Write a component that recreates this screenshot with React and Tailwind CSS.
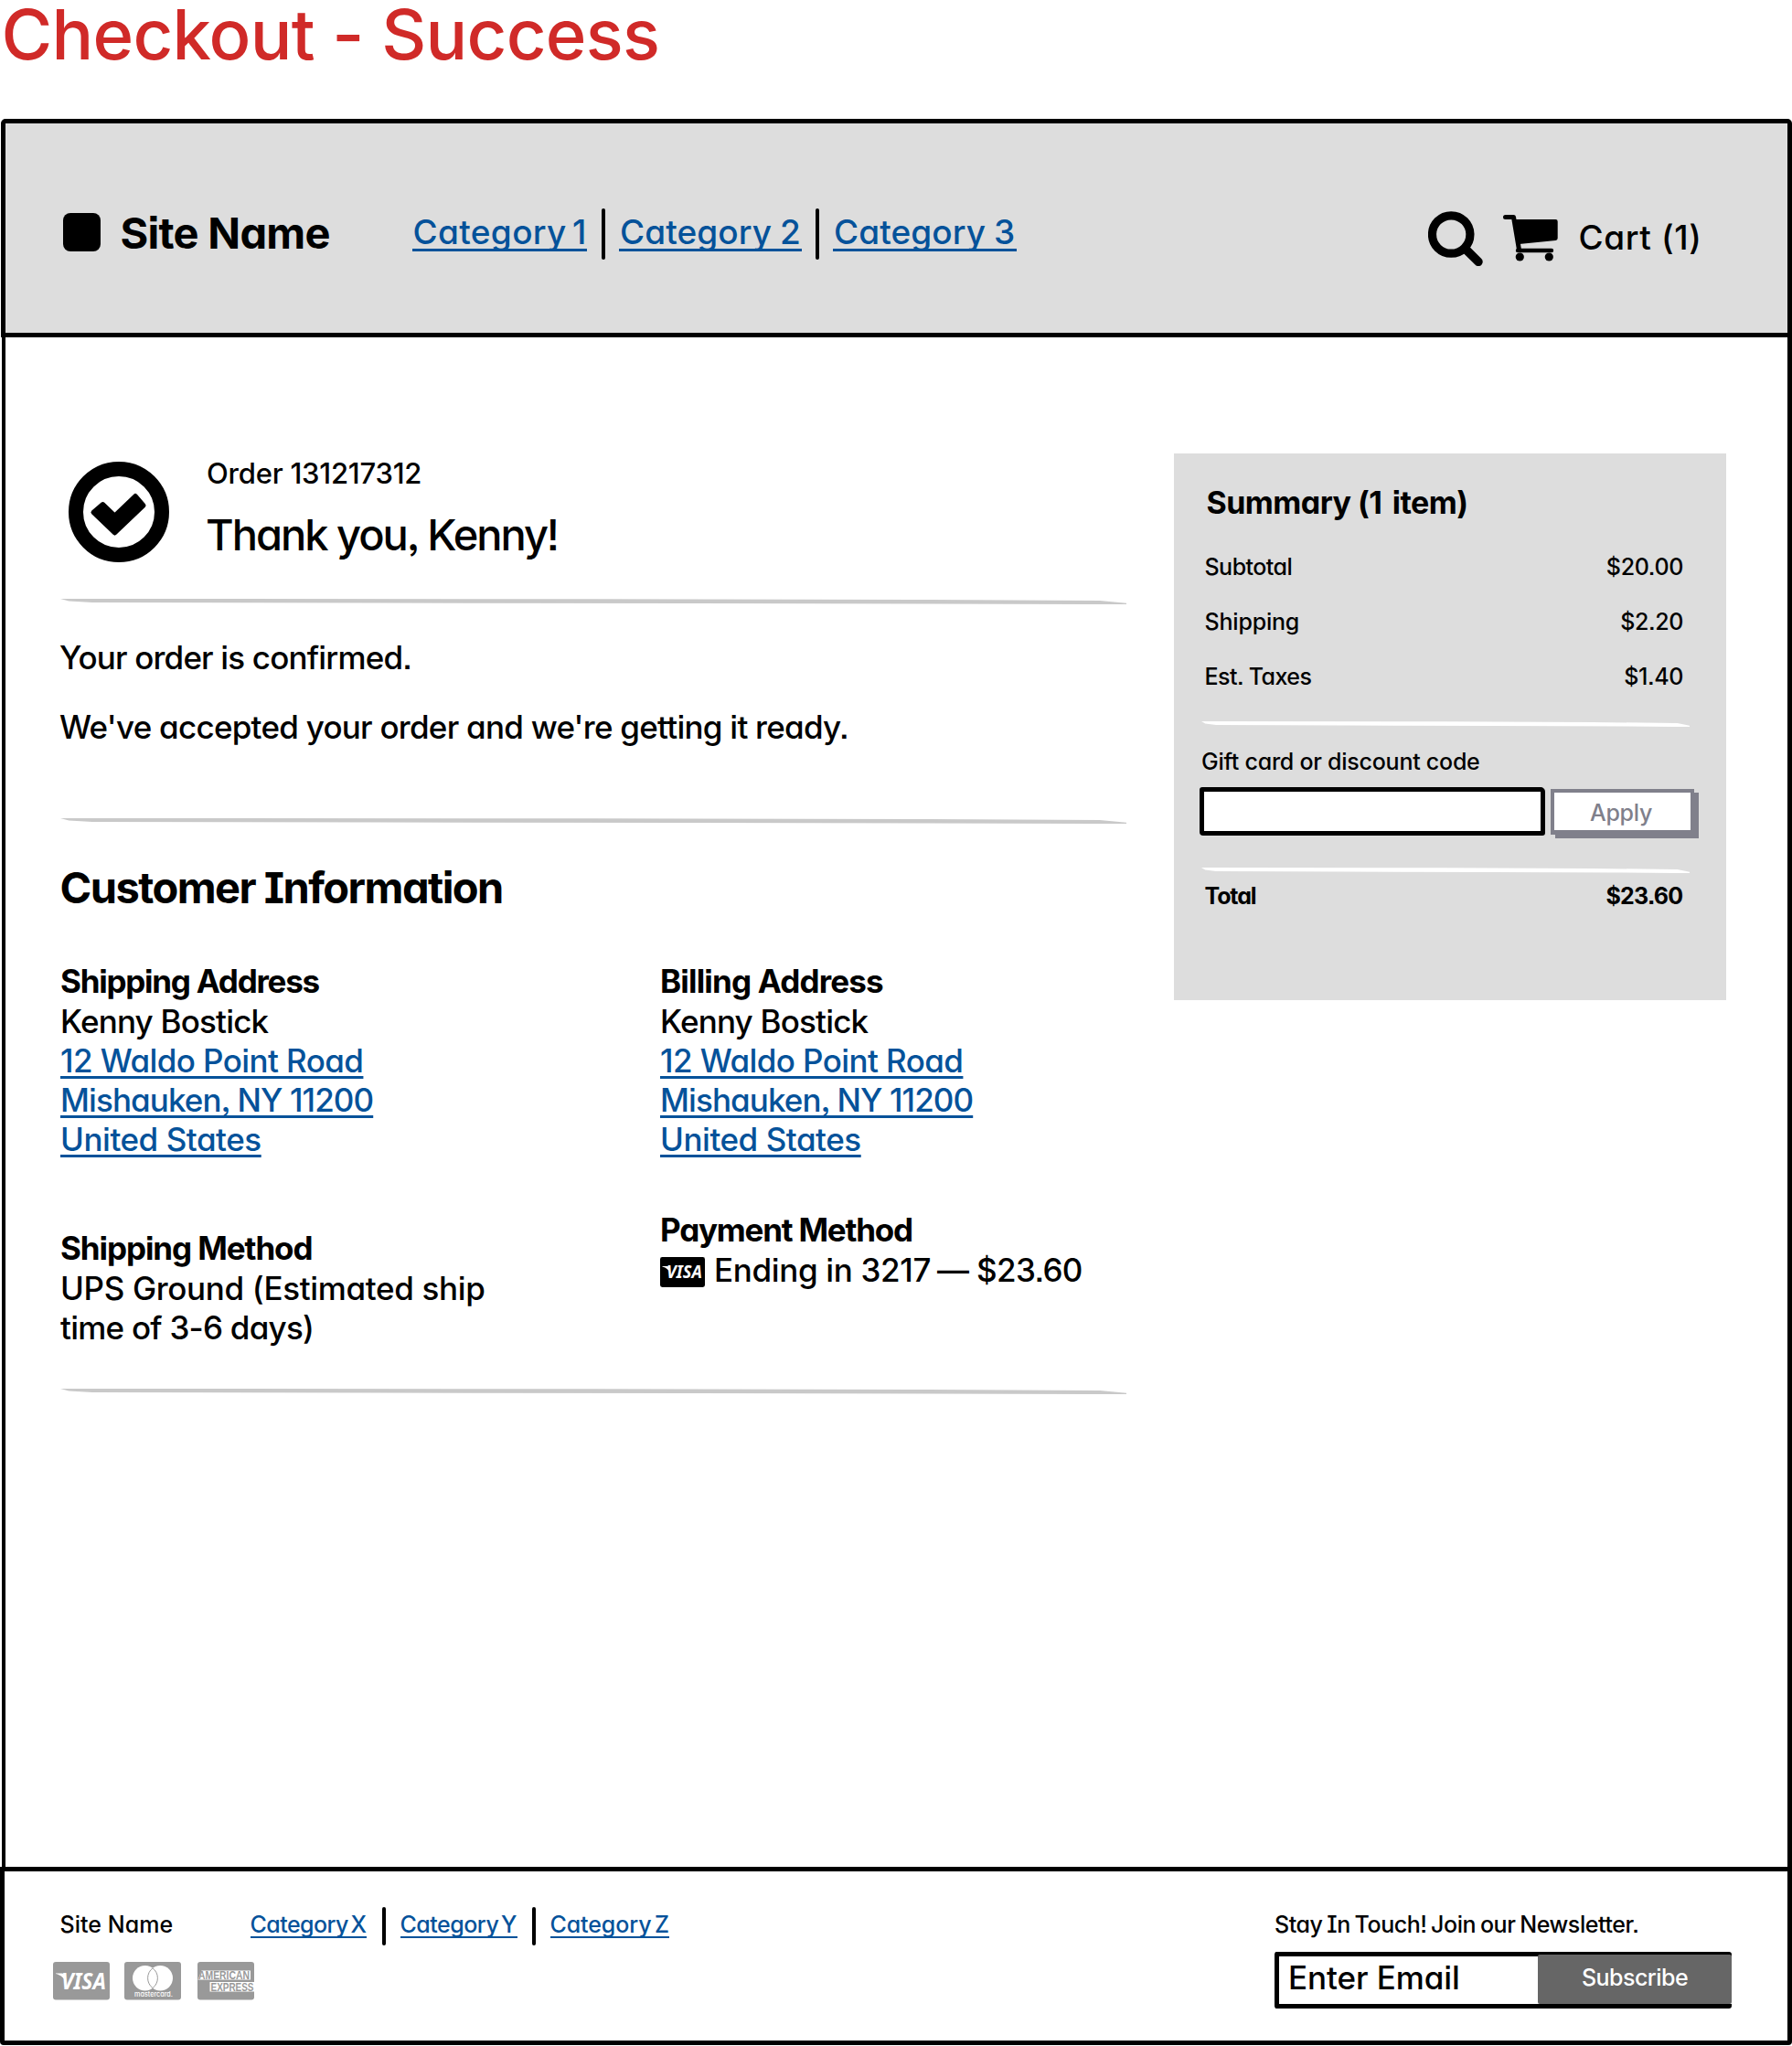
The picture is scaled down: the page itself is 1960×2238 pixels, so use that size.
function Visa({ className }) {
  return (
    <svg viewBox="0 0 62 41.5" className={`overflow-visible ${className}`} role="img" aria-label="Visa">
      <rect width="62" height="41.5" rx="3" fill="currentColor" />
      <text
        x="9"
        y="29.6"
        textLength="49"
        lengthAdjust="spacingAndGlyphs"
        className="fill-white font-['Open_Sans',sans-serif] text-[24.5px] font-bold italic"
      >
        VISA
      </text>
      <path d="M3 12.4h6.4c1.8 0 2.6.7 3 2.3l1.8 7.6C12.200 17.600 8.600 14.400 3 13z" fill="#fff" />
    </svg>
  );
}

function Mastercard({ className }) {
  return (
    <svg viewBox="0 0 62 41.5" className={className} role="img" aria-label="Mastercard">
      <rect width="62" height="41.5" rx="3" fill="currentColor" />
      <circle cx="22.700" cy="17.700" r="13.700" fill="#fff" />
      <circle cx="39.300" cy="17.700" r="13.700" fill="#fff" />
      <path d="M31 6.800a13.700 13.700 0 0 1 0 21.800a13.700 13.700 0 0 1 0-21.800z" fill="#fff" stroke="currentColor" strokeWidth="1" />
      <text
        x="11"
        y="38"
        textLength="42"
        lengthAdjust="spacingAndGlyphs"
        className="fill-white font-['Inter',sans-serif] text-[7.5px] font-medium [font-feature-settings:'cv11']"
      >
        mastercard.
      </text>
    </svg>
  );
}

function Amex({ className }) {
  return (
    <svg viewBox="0 0 62 41.5" className={`overflow-visible ${className}`} role="img" aria-label="American Express">
      <rect width="62" height="41.5" rx="3" fill="currentColor" />
      <path d="M0.500 19.500L4.500 9.500H58V19.500ZM13.500 22H62V32.500H13.500Z" fill="#fff" />
      <g fill="currentColor" className="font-['Liberation_Sans',sans-serif] text-[12px] font-bold">
        <text x="1" y="18.800" textLength="56" lengthAdjust="spacingAndGlyphs">AMERICAN</text>
        <text x="14.500" y="31.500" textLength="47" lengthAdjust="spacingAndGlyphs">EXPRESS</text>
      </g>
    </svg>
  );
}

function SearchIcon() {
  return (
    <svg viewBox="0 0 60 60" className="h-[60px] w-[60px]" fill="none" stroke="#000">
      <circle cx="25.200" cy="25.500" r="20.700" strokeWidth="9.200" />
      <path d="M41 41.500L55 55.300" strokeWidth="9.500" strokeLinecap="round" />
    </svg>
  );
}

function CartIcon() {
  return (
    <svg viewBox="0 0 60 51" className="h-[51px] w-[60px]">
      <path d="M2.500 2.500H11.500L17.300 37" fill="none" stroke="#000" strokeWidth="5" strokeLinecap="round" strokeLinejoin="round" />
      <path d="M12 5H57.500a2.200 2.200 0 0 1 2.200 2.200V25.500a2.500 2.500 0 0 1-2.200 2.500L17.500 32z" />
      <path d="M16 39H53" stroke="#000" strokeWidth="4.400" strokeLinecap="round" />
      <circle cx="18.300" cy="46" r="4.600" />
      <circle cx="50.300" cy="46" r="4.600" />
    </svg>
  );
}

function CheckCircle() {
  return (
    <svg viewBox="0 0 110 110" className="ml-[9px] mt-[9px] h-[110px] w-[110px] shrink-0">
      <circle cx="55" cy="55" r="47" fill="none" stroke="#000" strokeWidth="16" />
      <path
        d="M37.500 46.500L50.500 59L73 37.500L82 48L50.500 78L27 55.500Z"
        stroke="#000"
        strokeWidth="5"
        strokeLinejoin="round"
      />
    </svg>
  );
}

function Rule({ className }) {
  return (
    <div
      className={`h-[7px] [clip-path:polygon(0_0,50%_3%,80%_14%,97.5%_28%,100%_68%,100%_86%,97%_84%,60%_70%,30%_66%,3%_57%,0.8%_34%)] ${className}`}
    />
  );
}

const LINK =
  "text-[#05529a] underline decoration-[2.5px] underline-offset-[4px] [text-decoration-skip-ink:none]";

function Address({ title, titleClass }) {
  return (
    <div className="flex flex-col items-start text-[35px] leading-[43px]">
      <h3 className={`h-[44px] font-bold ${titleClass}`}>{title}</h3>
      <p className="tracking-[-0.8px]">Kenny Bostick</p>
      <a className={`tracking-[-0.58px] ${LINK}`}>12 Waldo Point Road</a>
      <a className={`tracking-[-0.9px] ${LINK}`}>Mishauken, NY 11200</a>
      <a className={`tracking-[-0.46px] ${LINK}`}>United States</a>
    </div>
  );
}

function SummaryRow({ label, labelClass, value, valueClass }) {
  return (
    <div className="ml-[33.500px] flex h-[60px] w-[523.5px] justify-between text-[25px] leading-none">
      <span className={labelClass}>{label}</span>
      <span className={valueClass}>{value}</span>
    </div>
  );
}

function Header() {
  return (
    <header className="ml-px flex h-[239px] items-start rounded-t-[5px] border-[5px] border-black bg-[#dddddd] whitespace-nowrap">
      <div className="ml-[63px] mt-[98px] h-[42px] w-[41px] rounded-[8px] bg-black" />
      <h2 className="ml-[21.500px] mt-[96px] w-[319.5px] text-[47px] font-bold leading-none tracking-[-0.72px]">
        Site Name
      </h2>
      <nav className="mt-[93px] flex text-[37px] leading-none text-[#05529a]">
        <a className="mt-[7px] h-[40px] w-[191px] border-b-[3px] border-[#05529a] pl-[0.500px] tracking-[0.35px] [word-spacing:-4px]">
          Category 1
        </a>
        <span className="ml-4 h-14 w-1 rounded-full bg-black" />
        <a className="ml-[15px] mt-[7px] h-[40px] w-[200px] border-b-[3px] border-[#05529a] pl-px tracking-[0.08px] [word-spacing:-1px]">
          Category 2
        </a>
        <span className="ml-[15px] h-14 w-1 rounded-full bg-black" />
        <a className="ml-[15px] mt-[7px] h-[40px] w-[201px] border-b-[3px] border-[#05529a] pl-px tracking-[0.08px] [word-spacing:-1px]">
          Category 3
        </a>
      </nav>
      <div className="ml-auto mt-[95.500px] flex w-[393px] items-start">
        <SearchIcon />
        <div className="ml-[22px] mt-1">
          <CartIcon />
        </div>
        <span className="ml-[22.5px] mt-[10px] text-[37px] leading-none tracking-[0.6px]">Cart (1)</span>
      </div>
    </header>
  );
}

function OrderDetails() {
  return (
    <section className="flex w-[1166px] flex-col whitespace-nowrap">
      <div className="flex h-[159px] items-start">
        <CheckCircle />
        <div className="ml-[40px] mt-[6px] flex flex-col leading-none">
          <p className="ml-px text-[31px] leading-none tracking-[-0.22px]">Order 131217312</p>
          <h2 className="mt-[28px] text-[47px] leading-none tracking-[-2px]">Thank you, Kenny!</h2>
        </div>
      </div>
      <Rule className="bg-[#c9c9c9]" />
      <p className="-ml-px mt-[40px] text-[35px] leading-none tracking-[-0.83px]">Your order is confirmed.</p>
      <p className="-ml-px mt-[41px] text-[35px] leading-none tracking-[-0.75px]">
        We&apos;ve accepted your order and we&apos;re getting it ready.
      </p>
      <Rule className="mt-[82px] bg-[#c9c9c9]" />
      <h2 className="-ml-[0.500px] mt-[45px] text-[47px] font-bold leading-none tracking-[-1.55px]">
        Customer Information
      </h2>
      <div className="mt-[58px] grid h-[467px] grid-cols-[656px_1fr]">
        <div>
          <Address title="Shipping Address" titleClass="tracking-[-1.25px]" />
          <div className="mt-[76px] text-[35px] leading-[43px]">
            <h3 className="h-[44px] font-bold tracking-[-1.08px]">Shipping Method</h3>
            <p className="tracking-[-0.35px]">UPS Ground (Estimated ship</p>
            <p className="tracking-[-0.76px]">time of 3-6 days)</p>
          </div>
        </div>
        <div>
          <Address title="Billing Address" titleClass="tracking-[-0.82px]" />
          <div className="mt-[56px] text-[35px] leading-[43px]">
            <h3 className="h-[44px] font-bold tracking-[-1.22px]">Payment Method</h3>
            <div className="flex">
              <Visa className="mt-[7px] h-[33px] w-[49px] text-black" />
              <span className="ml-[10px] w-[244px] tracking-[-0.35px]">Ending in 3217</span>
              <span className="tracking-[-0.65px]">— $23.60</span>
            </div>
          </div>
        </div>
      </div>
      <Rule className="bg-[#c9c9c9]" />
    </section>
  );
}

function Summary() {
  return (
    <aside className="ml-[52px] flex h-[598px] w-[604px] flex-col bg-[#dddddd] whitespace-nowrap">
      <h3 className="ml-[35.500px] mt-[37px] h-[75px] text-[34px] font-bold leading-none tracking-[-0.55px]">
        Summary (1<span className="ml-[4px]"> item)</span>
      </h3>
      <SummaryRow label="Subtotal" labelClass="tracking-[-0.53px]" value="$20.00" valueClass="tracking-[-0.34px]" />
      <SummaryRow label="Shipping" labelClass="tracking-[-0.2px]" value="$2.20" valueClass="tracking-[-0.39px]" />
      <SummaryRow label="Est. Taxes" labelClass="tracking-[-0.55px]" value="$1.40" valueClass="tracking-[-0.38px]" />
      <Rule className="ml-[30px] mt-px w-[534px] bg-white" />
      <p className="ml-[30px] mt-[25px] text-[25px] leading-none tracking-[-0.25px]">Gift card or discount code</p>
      <div className="ml-[28px] mt-[15px] flex h-[58px] items-start">
        <div className="h-[53px] w-[378px] rounded-[3px_5px_3px_4px] border-[5px] border-black bg-white" />
        <div className="ml-[6px] mt-[2px] h-[50px] w-[157px] border-4 border-b-[5px] border-[#80808b] bg-white pl-[39px] pt-[10px] text-[25px] leading-none tracking-[-0.28px] text-[#80808b] shadow-[5px_4px_0_#80808b]">
          Apply
        </div>
      </div>
      <Rule className="ml-[30px] mt-[30px] w-[534px] bg-white" />
      <div className="ml-[33.500px] mt-[12px] flex w-[523px] justify-between text-[25px] font-bold leading-none">
        <span className="tracking-[-1.1px]">Total</span>
        <span className="tracking-[-0.72px]">$23.60</span>
      </div>
    </aside>
  );
}

function Footer() {
  return (
    <footer className="flex h-[195px] items-start rounded-b-[4px] border-[5px] border-black bg-white whitespace-nowrap">
      <div className="ml-[53px] mt-[39px] flex flex-col">
        <div className="flex text-[25px] leading-[25px]">
          <span className="ml-[7.500px] mt-[7px] w-[208px] tracking-[0.04px]">Site Name</span>
          <nav className="flex text-[#05529a]">
            <a className="mt-[7px] h-[27px] w-[127px] border-b-2 border-[#05529a] tracking-[-0.55px] [word-spacing:-3.500px]">
              Category X
            </a>
            <span className="ml-[17px] h-[42px] w-1 rounded-full bg-black" />
            <a className="ml-[16px] mt-[7px] h-[27px] w-[128px] border-b-2 border-[#05529a] tracking-[-0.5px] [word-spacing:-3.500px]">
              Category Y
            </a>
            <span className="ml-[16px] h-[42px] w-1 rounded-full bg-black" />
            <a className="ml-[16px] mt-[7px] h-[27px] w-[130px] border-b-2 border-[#05529a] tracking-[-0.1px] [word-spacing:-3px]">
              Category Z
            </a>
          </nav>
        </div>
        <div className="mt-[18px] flex text-[#999999]">
          <Visa className="h-[41.500px] w-[62px]" />
          <Mastercard className="ml-4 h-[41.500px] w-[62px]" />
          <Amex className="ml-[18px] h-[41.500px] w-[62px]" />
        </div>
      </div>
      <div className="ml-auto mr-[61px] mt-[46px] w-[500px]">
        <p className="text-[25px] leading-none tracking-[-0.42px] [word-spacing:-1.500px]">
          Stay In Touch! Join our Newsletter.
        </p>
        <div className="mt-[17px] flex h-[62px] justify-between rounded-[3px] border-y-[5px] border-l-[5px] border-black bg-white">
          <span className="ml-[10px] mt-[6px] text-[35px] leading-none tracking-[-0.08px]">Enter Email</span>
          <button className="-mt-[2px] flex h-[54px] w-[212px] justify-center rounded-[2px] bg-[#666666] pt-[13px] text-[25px] leading-none tracking-[-0.54px] text-white">
            Subscribe
          </button>
        </div>
      </div>
    </footer>
  );
}

export default function App() {
  return (
    <div className="flex h-[2238px] w-[1960px] flex-col bg-white font-['Inter',sans-serif] font-medium text-black [font-feature-settings:'cv11','cv08','ss07','ss03']">
      <div className="h-[130px] pl-[1.500px]">
        <h1 className="text-[76px] font-medium leading-[74px] tracking-[-0.74px] text-[#d02a28]">
          Checkout - Success
        </h1>
      </div>
      <Header />
      <main className="ml-[2px] flex h-[1673px] items-start border-l-[4px] border-r-[5px] border-black pl-[60px] pt-[127px]">
        <OrderDetails />
        <Summary />
      </main>
      <Footer />
    </div>
  );
}
